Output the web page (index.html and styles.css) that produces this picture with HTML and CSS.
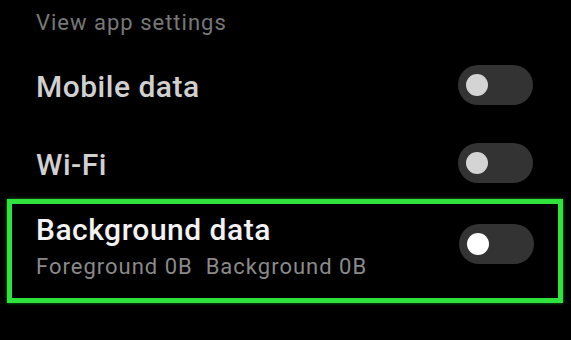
FILE: index.html
```html
<!DOCTYPE html>
<html lang="en">
<head>
    <meta charset="UTF-8">
    <title>App data usage</title>
    <link rel="stylesheet" href="styles.css">
</head>
<body>
    <div class="screen">
        <div class="header">View app settings</div>

        <div class="row row-first">
            <span class="title">Mobile data</span>
            <span class="switch"><span class="knob"></span></span>
        </div>

        <div class="row row-second">
            <span class="title">Wi-Fi</span>
            <span class="switch"><span class="knob"></span></span>
        </div>

        <!-- highlighted row -->
        <div class="highlight">
            <div class="row row-bg">
                <div class="text">
                    <div class="title bright">Background data</div>
                    <div class="sub">Foreground 0B&nbsp;&nbsp;Background 0B</div>
                </div>
                <span class="switch"><span class="knob white"></span></span>
            </div>
        </div>
    </div>
</body>
</html>
```

FILE: styles.css
```css
html, body {
    margin: 0;
    background: #000;
}

.screen {
    width: 571px;
    height: 340px;
    font-family: Roboto, "Noto Sans", sans-serif;
    overflow: hidden;
}

.header {
    height: 35px;
    padding: 11px 0 0 36px;
    font-size: 22px;
    line-height: 24px;
    letter-spacing: 1px;
    color: #787878;
}

.row {
    display: flex;
    align-items: center;
    justify-content: space-between;
    padding: 0 38px 0 36px;
}

.row-first { height: 78px; }
.row-second { height: 70px; padding-top: 4px; }

.row-first .title,
.row-second .title { padding-top: 4px; }

.title {
    font-size: 30px;
    line-height: 34px;
    font-weight: 500;
    letter-spacing: 0.5px;
    color: #d0d0d0;
}

.title.bright { color: #f2f2f2; }

.sub {
    margin-top: 8px;
    font-size: 22px;
    line-height: 24px;
    letter-spacing: 1px;
    color: #8a8a8a;
}

.switch {
    width: 75px;
    height: 40px;
    border-radius: 20px;
    background: #333;
    display: flex;
    align-items: center;
    padding-left: 8px;
    box-sizing: border-box;
}

.knob {
    width: 22px;
    height: 22px;
    border-radius: 50%;
    background: #d4d4d4;
}
.knob.white { background: #fff; }

.highlight {
    margin: 1px 8px 0 7px;
    border: 5px solid #2fe33c;
    box-shadow: 0 0 3px rgba(47, 227, 60, .6);
}

.row-bg {
    align-items: flex-start;
    padding: 9px 24px 19px 24px;
}

.row-bg .switch { margin-top: 11px; }
```
